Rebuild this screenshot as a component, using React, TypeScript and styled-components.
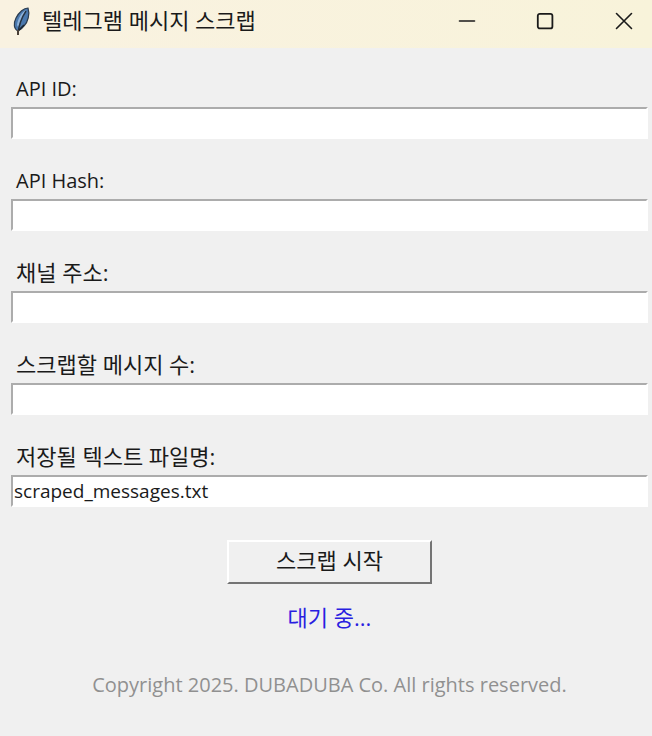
import React from "react";
import styled, { createGlobalStyle } from "styled-components";

const Global = createGlobalStyle`
  * { box-sizing: border-box; }
  html, body, #root { margin: 0; min-height: 100%; }
  body {
    background: #f0f0f0;
    font-family: "Open Sans", "Noto Sans CJK KR", sans-serif;
    color: #1a1a1a;
  }
`;

const Window = styled.main`
  display: flex;
  flex-direction: column;
  background: #f0f0f0;
`;

const TitleBar = styled.header`
  display: flex;
  align-items: center;
  height: 48px;
  padding: 0 0 6px 12px;
  background: linear-gradient(90deg, #f9f2e1, #f8f3da);
`;

const Title = styled.h1`
  flex: 1;
  margin: 0 0 0 9px;
  padding-bottom: 2px;
  font-size: 22px;
  line-height: 28px;
  font-weight: 400;
`;

const Controls = styled.div`
  display: flex;
`;

const CaptionButton = styled.button`
  display: flex;
  align-items: center;
  justify-content: center;
  width: 78px;
  height: 40px;
  padding: 0;
  border: 0;
  background: transparent;
  color: #1a1a1a;
  &:last-child { width: 56px; margin-left: 12px; }
`;

const Form = styled.form`
  display: flex;
  flex-direction: column;
  align-items: center;
  gap: 24px;
  padding: 23px 4px 0 11px;
`;

const Field = styled.div`
  width: 100%;
  display: flex;
  flex-direction: column;
`;

const Label = styled.label<{ $latin: boolean }>`
  padding-left: 5px;
  font-size: ${(p) => (p.$latin ? 20 : 22)}px;
  line-height: ${(p) => (p.$latin ? 36 : 34)}px;
  height: 36px;
`;

const Input = styled.input`
  width: 100%;
  height: 32px;
  padding: 0 1px;
  border: 2px solid;
  border-color: #acacac #fff #fff #acacac;
  background: #fff;
  font: inherit;
  font-size: 19px;
  color: #1a1a1a;
  outline: 0;
`;

const StartButton = styled.button`
  width: 205px;
  height: 44px;
  margin-top: 9px;
  padding: 0 0 4px;
  border: 2px solid;
  border-color: #fff #747474 #747474 #fff;
  background: #f0f0f0;
  font: inherit;
  font-size: 22px;
  line-height: 36px;
  color: #1a1a1a;
`;

const Status = styled.output`
  margin-top: 19px;
  padding: 0 4px 0 11px;
  font-size: 22px;
  line-height: 28px;
  color: #2a1ee0;
  text-align: center;
`;

const Copyright = styled.footer`
  margin-top: 40px;
  padding: 0 4px 0 11px;
  font-size: 20px;
  line-height: 28px;
  color: #909090;
  text-align: center;
`;

const FeatherIcon = () => (
  <svg width="21" height="30" viewBox="0 0 21 30" aria-hidden="true">
    <path d="M6 25C2 23 1 18 4 12C7 6 12 2 16 2C18 8 16 16 12 20C10 23 8 24 6 25Z" fill="#4a78ad" stroke="#2c3d50" strokeWidth="1.2" />
    <path d="M5 19C6 12 10 6 14 4C12 9 9 14 6 21Z" fill="#8fb3da" />
    <path d="M14 5C10 11 7 17 6 28" fill="none" stroke="#263443" strokeWidth="1.4" />
    <path d="M7 24L12 19" stroke="#1c2630" strokeWidth="1.6" />
    <path d="M6 24V29" stroke="#4b4037" strokeWidth="2" />
  </svg>
);

const fields = [
  { id: "api-id", label: "API ID:", latin: true, value: "" },
  { id: "api-hash", label: "API Hash:", latin: true, value: "" },
  { id: "channel", label: "채널 주소:", latin: false, value: "" },
  { id: "count", label: "스크랩할 메시지 수:", latin: false, value: "" },
  { id: "file", label: "저장될 텍스트 파일명:", latin: false, value: "scraped_messages.txt" },
];

export default function App() {
  return (
    <Window>
      <Global />
      <TitleBar>
        <FeatherIcon />
        <Title>텔레그램 메시지 스크랩</Title>
        <Controls>
          <CaptionButton type="button" aria-label="최소화">
            <svg width="18" height="18" viewBox="0 0 18 18" stroke="currentColor" strokeWidth="1.6" strokeLinecap="round"><path d="M1.5 9H16.5" /></svg>
          </CaptionButton>
          <CaptionButton type="button" aria-label="최대화">
            <svg width="18" height="18" viewBox="0 0 18 18" fill="none" stroke="currentColor" strokeWidth="1.8"><rect x="1.8" y="1.8" width="14.6" height="14.6" rx="2" /></svg>
          </CaptionButton>
          <CaptionButton type="button" aria-label="닫기">
            <svg width="18" height="18" viewBox="0 0 18 18" stroke="currentColor" strokeWidth="1.6" strokeLinecap="round"><path d="M1.5 1.5L16.5 16.5M16.5 1.5L1.5 16.5" /></svg>
          </CaptionButton>
        </Controls>
      </TitleBar>
      <Form onSubmit={(e) => e.preventDefault()}>
        {fields.map((f) => (
          <Field key={f.id}>
            <Label htmlFor={f.id} $latin={f.latin}>{f.label}</Label>
            <Input id={f.id} type="text" defaultValue={f.value} />
          </Field>
        ))}
        <StartButton type="submit">스크랩 시작</StartButton>
      </Form>
      <Status>대기 중...</Status>
      <Copyright>Copyright 2025. DUBADUBA Co. All rights reserved.</Copyright>
    </Window>
  );
}
